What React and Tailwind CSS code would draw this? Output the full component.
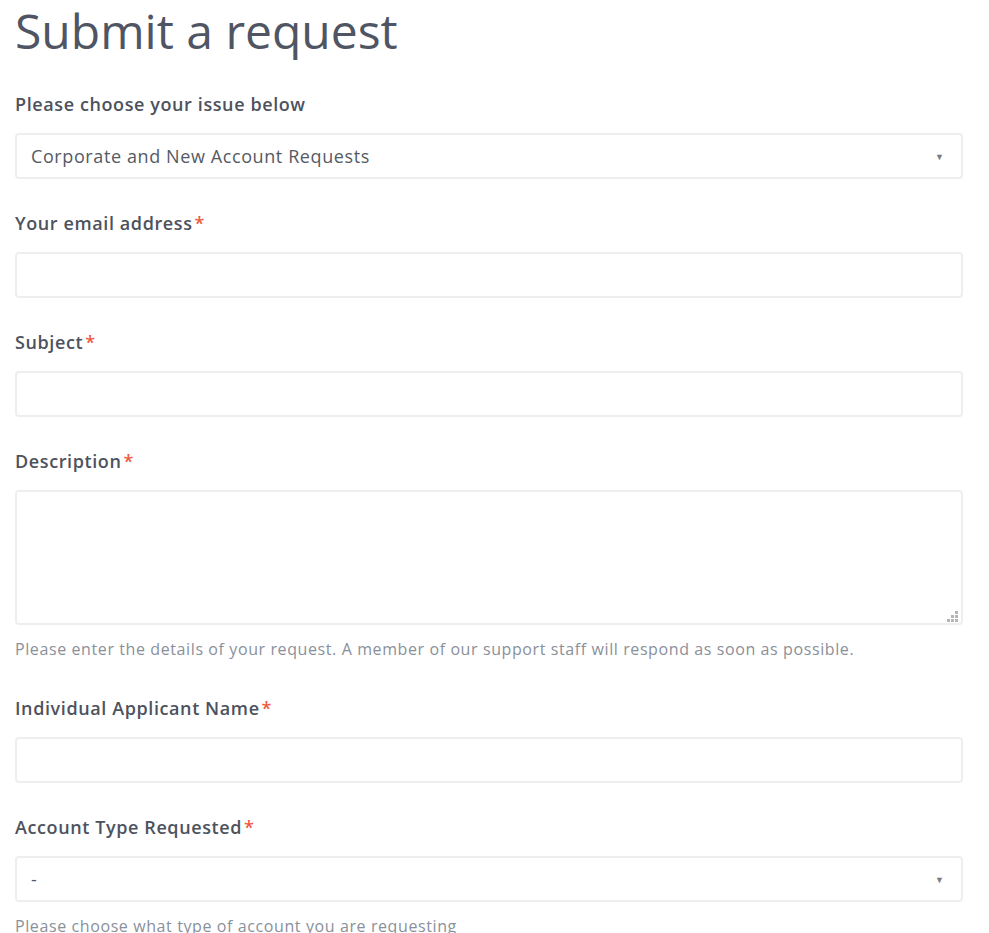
import React from 'react';

const font = { fontFamily: '"Open Sans", "Noto Sans", sans-serif' };

const Label = ({ children, required }) => (
  <label className="block text-[18px] leading-[27px] font-semibold tracking-[0.6px] text-[#4d525d]">
    {children}
    {required && <span className="ml-[2px] text-[#f05a40]">*</span>}
  </label>
);

const inputClass =
  'block w-full h-[46px] rounded-[4px] border-2 border-[#eeeeee] bg-white px-[14px] text-[18px] tracking-[0.6px] text-[#555a64] outline-none';

const Select = ({ value }) => (
  <div className="relative mt-[15px]">
    <div className={`${inputClass} flex items-center`}>{value}</div>
    <span className="absolute right-[19px] top-1/2 -translate-y-1/2 text-[9px] leading-none text-[#777c85]">▼</span>
  </div>
);

const Field = ({ label, required, children, hint, last }) => (
  <div className={hint ? 'mb-[34px]' : 'mb-[31px]'}>
    <Label required={required}>{label}</Label>
    {children}
    {hint && <p className="mt-[12px] text-[16px] leading-[24px] tracking-[0.6px] text-[#8a909a]">{hint}</p>}
  </div>
);

export default function App() {
  return (
    <div className="min-h-screen bg-white px-[15px]" style={font}>
      <div className="w-[948px]">
        <h1 className="text-[48px] leading-[62px] font-normal text-[#4f5563] mb-[29px]">Submit a request</h1>

        <Field label="Please choose your issue below">
          <Select value="Corporate and New Account Requests" />
        </Field>

        <Field label="Your email address" required>
          <input type="email" className={`${inputClass} mt-[15px]`} />
        </Field>

        <Field label="Subject" required>
          <input type="text" className={`${inputClass} mt-[15px]`} />
        </Field>

        <Field
          label="Description"
          required
          hint="Please enter the details of your request. A member of our support staff will respond as soon as possible."
        >
          <div className="relative mt-[15px]">
            <textarea className="block w-full h-[135px] resize-none rounded-[4px] border-2 border-[#eeeeee] bg-white px-[14px] py-[10px] text-[18px] text-[#555a64] outline-none" />
            {/* resize grip */}
            <svg className="absolute right-[5px] bottom-[3px]" width="11" height="11" viewBox="0 0 11 11">
              <rect x="8" y="0" width="3" height="3" fill="#b5b5b5" />
              <rect x="4" y="4" width="3" height="3" fill="#b5b5b5" />
              <rect x="8" y="4" width="3" height="3" fill="#b5b5b5" />
              <rect x="0" y="8" width="3" height="3" fill="#b5b5b5" />
              <rect x="4" y="8" width="3" height="3" fill="#b5b5b5" />
              <rect x="8" y="8" width="3" height="3" fill="#b5b5b5" />
            </svg>
          </div>
        </Field>

        <Field label="Individual Applicant Name" required>
          <input type="text" className={`${inputClass} mt-[15px]`} />
        </Field>

        <Field
          label="Account Type Requested"
          required
          hint="Please choose what type of account you are requesting"
        >
          <Select value="-" />
        </Field>
      </div>
    </div>
  );
}
